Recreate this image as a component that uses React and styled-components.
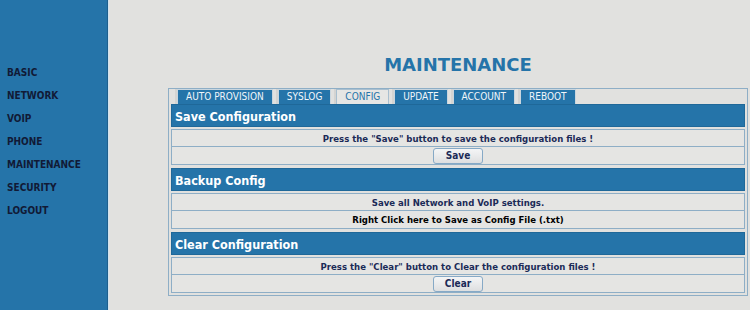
import React from 'react'
import styled, { createGlobalStyle } from 'styled-components'

const GlobalStyle = createGlobalStyle`
  html, body {
    margin: 0;
    padding: 0;
    background: #e1e1df;
  }
`

const Page = styled.div`
  display: flex;
  min-height: 310px;
  font-family: "DejaVu Sans Condensed", "DejaVu Sans", Verdana, sans-serif;
`

const Sidebar = styled.nav`
  width: 107px;
  flex: 0 0 107px;
  background: #2574a9;
  border-right: 1px solid #1d5f8e;
  box-shadow: 1px 0 0 #cfe3ef;
  padding-top: 66px;
  display: flex;
  flex-direction: column;
  gap: 9px;
`

const NavItem = styled.a`
  display: block;
  padding-left: 7px;
  height: 14px;
  line-height: 14px;
  font-size: 10px;
  font-weight: bold;
  color: #111a36;
  text-decoration: none;
`

const Main = styled.main`
  flex: 1;
  padding: 54px 2px 0 60px;
`

const Title = styled.h1`
  margin: 0 0 12px;
  text-align: center;
  font-size: 18px;
  line-height: 22px;
  font-weight: bold;
  color: #2574a9;
  font-family: "DejaVu Sans", Verdana, sans-serif;
`

const Panel = styled.div`
  border: 1px solid #8eaec6;
  padding: 0 2px 2px;
  display: flex;
  flex-direction: column;
`

const Tabs = styled.div`
  display: flex;
  gap: 5px;
  padding-left: 6px;
  height: 15px;
`

const Tab = styled.div`
  height: 14px;
  line-height: 14px;
  padding: 0 8px;
  font-size: 10px;
  border: 1px solid ${p => (p.$active ? '#a9bfcf' : '#c9d6df')};
  border-bottom: none;
  background: ${p => (p.$active ? '#e6e6e4' : '#2574a9')};
  color: ${p => (p.$active ? '#2574a9' : '#f2f6fa')};
  box-shadow: -2px 0 0 #d4d4d2;
`

const Group = styled.section`
  display: flex;
  flex-direction: column;

  & + & {
    margin-top: 3px;
  }
`

const Header = styled.div`
  height: 23px;
  line-height: 23px;
  background: #2574a9;
  border: 1px solid #1f6899;
  box-sizing: border-box;
  padding-left: 3px;
  color: #fff;
  font-size: 12.5px;
  font-weight: bold;
  margin-bottom: 2px;
`

const Row = styled.div`
  height: 18px;
  box-sizing: border-box;
  border: 1px solid #8eaec6;
  background: #e5e5e3;
  display: flex;
  align-items: center;
  justify-content: center;
  font-size: 9.5px;
  font-weight: bold;
  color: ${p => p.$color || '#1b2a57'};

  & + & {
    border-top: none;
  }
`

const Button = styled.button`
  width: 50px;
  height: 16px;
  padding: 0;
  border: 1px solid #86a9c6;
  border-radius: 3px;
  background: linear-gradient(#f4f5f6, #dedfe0);
  font-family: inherit;
  font-size: 10px;
  font-weight: bold;
  color: #1b2a57;
  line-height: 14px;
`

const navItems = ['BASIC', 'NETWORK', 'VOIP', 'PHONE', 'MAINTENANCE', 'SECURITY', 'LOGOUT']
const tabs = ['AUTO PROVISION', 'SYSLOG', 'CONFIG', 'UPDATE', 'ACCOUNT', 'REBOOT']

export default function App() {
  return (
    <>
      <GlobalStyle />
      <Page>
        <Sidebar>
          {navItems.map(item => (
            <NavItem key={item} href="#">{item}</NavItem>
          ))}
        </Sidebar>
        <Main>
          <Title>MAINTENANCE</Title>
          <Panel>
            <Tabs>
              {tabs.map(t => (
                <Tab key={t} $active={t === 'CONFIG'}>{t}</Tab>
              ))}
            </Tabs>
            <Group>
              <Header>Save Configuration</Header>
              <Row>Press the "Save" button to save the configuration files !</Row>
              <Row><Button>Save</Button></Row>
            </Group>
            <Group>
              <Header>Backup Config</Header>
              <Row>Save all Network and VoIP settings.</Row>
              <Row $color="#000">Right Click here to Save as Config File (.txt)</Row>
            </Group>
            <Group>
              <Header>Clear Configuration</Header>
              <Row>Press the "Clear" button to Clear the configuration files !</Row>
              <Row><Button>Clear</Button></Row>
            </Group>
          </Panel>
        </Main>
      </Page>
    </>
  )
}
